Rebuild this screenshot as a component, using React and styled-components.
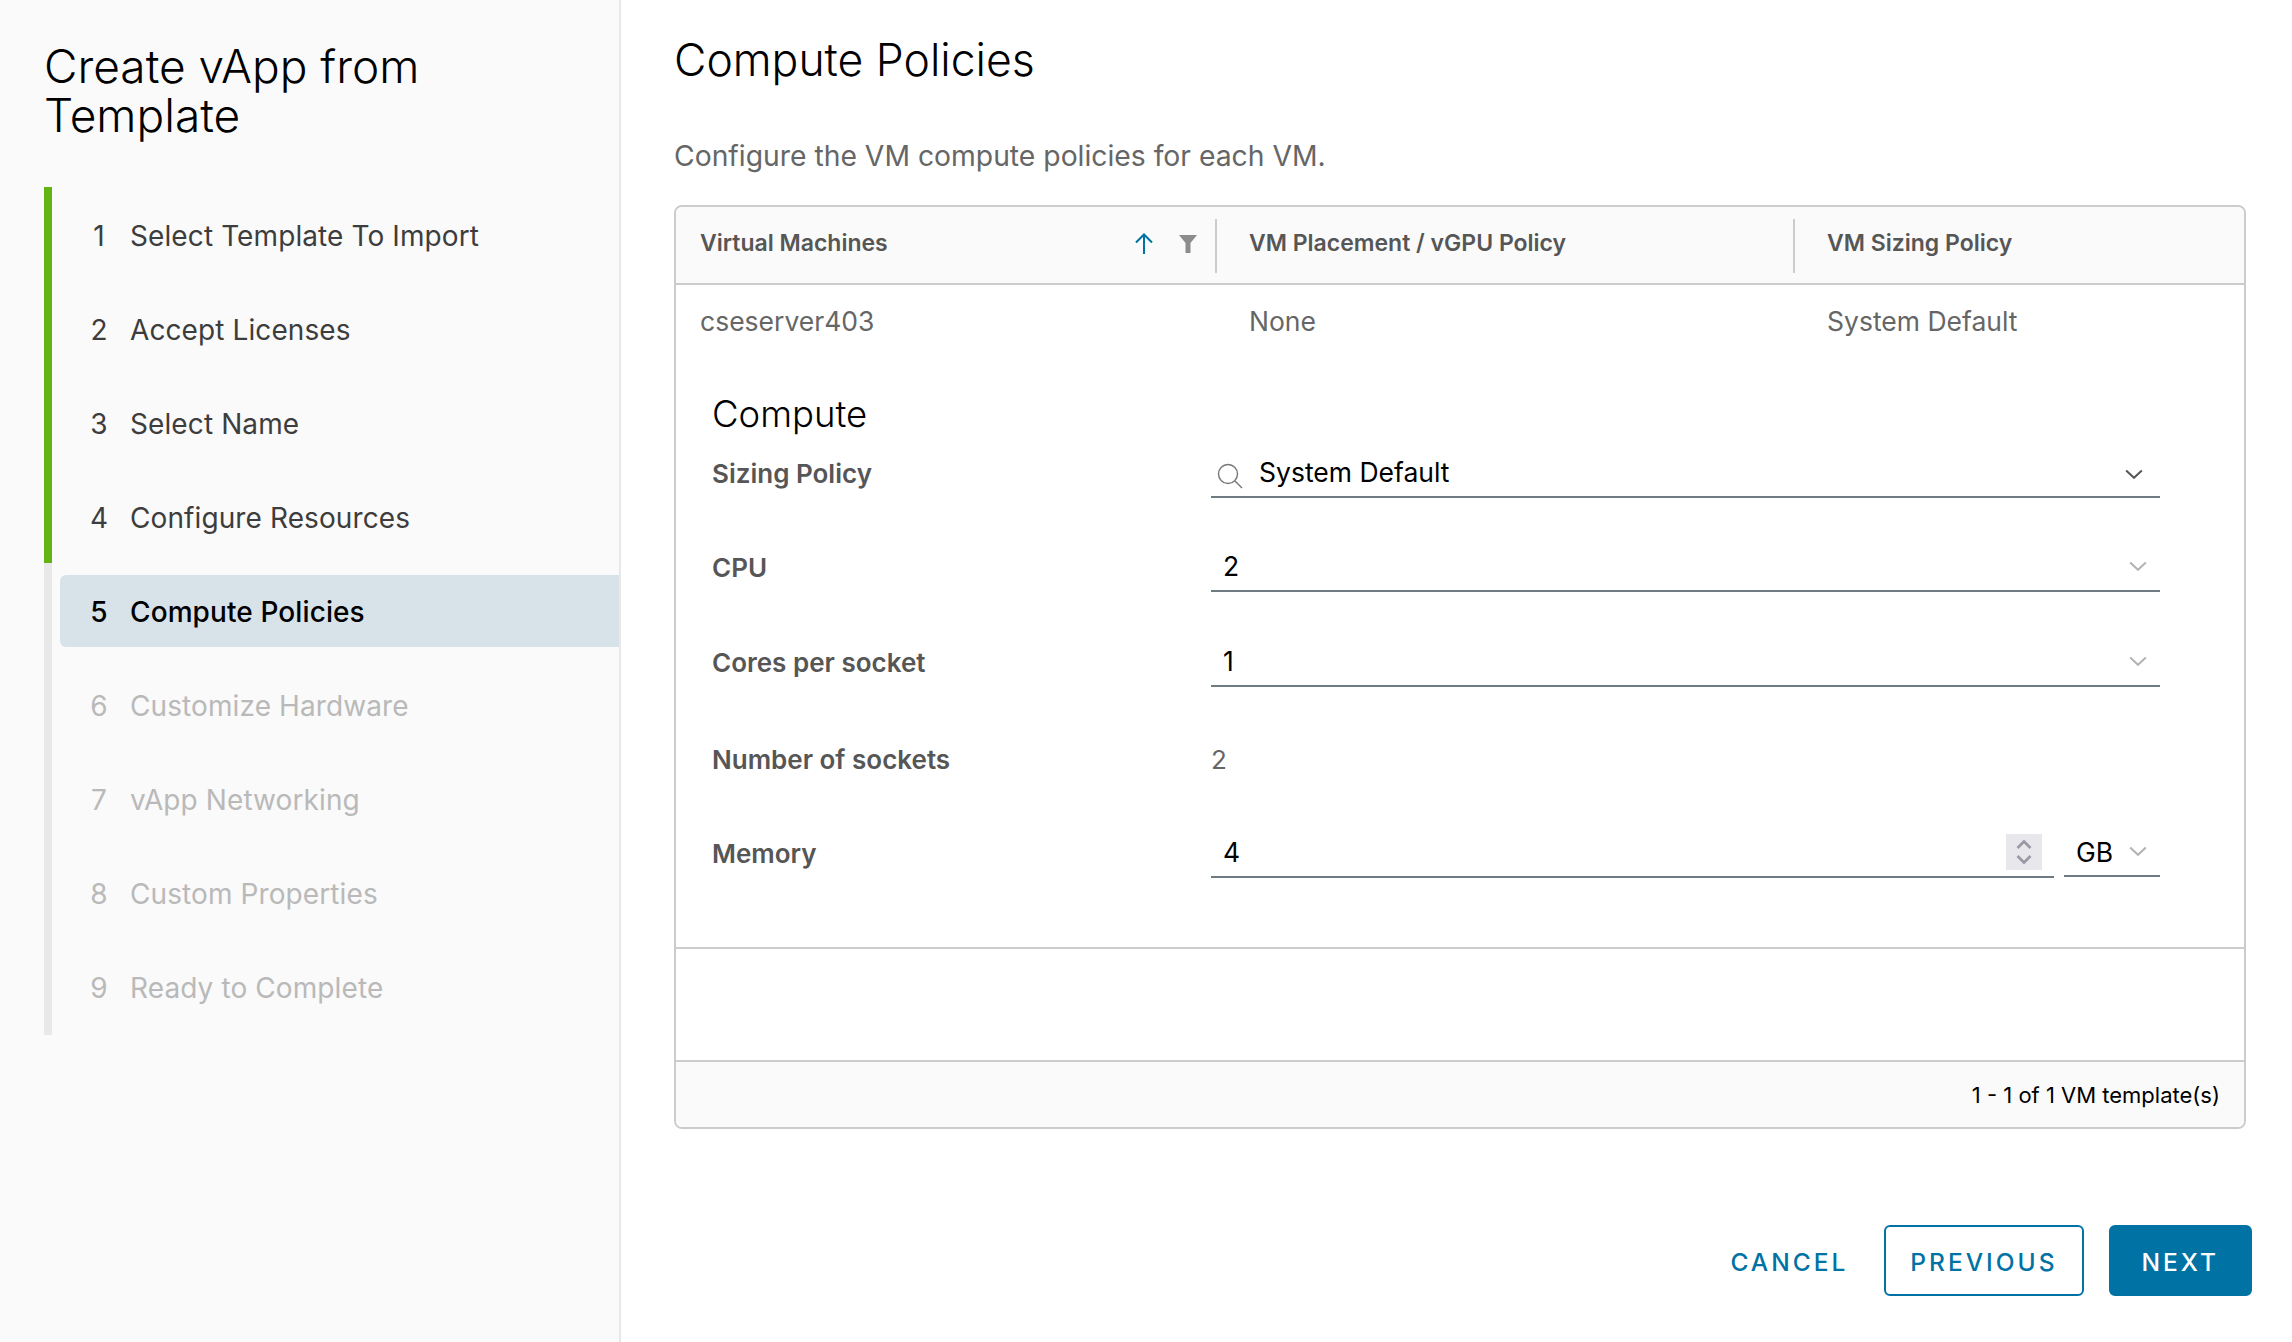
import React from "react";
import styled, { createGlobalStyle } from "styled-components";

const GlobalStyle = createGlobalStyle`
  html, body {
    margin: 0;
    padding: 0;
    background: #ffffff;
    font-family: "Inter", "Liberation Sans", sans-serif;
  }
  * {
    box-sizing: border-box;
  }
`;

const Page = styled.div`
  display: flex;
  width: 2292px;
  height: 1342px;
  overflow: hidden;
`;

const Sidebar = styled.aside`
  width: 621px;
  flex: none;
  padding: 42px 0 0 44px;
  background: #fafafa;
  border-right: 2px solid #e8e8e8;
`;

const Title = styled.h1`
  margin: 0;
  font-size: 46px;
  line-height: 49px;
  font-weight: 300;
  color: #000000;
`;

const Steps = styled.ol`
  list-style: none;
  margin: 47px 0 0;
  padding: 0;
`;

const Step = styled.li`
  height: 94px;
  padding: 12px 0 10px 8px;
  border-left: 8px solid ${(p) => (p.$done ? "#60b515" : "#e8e8e8")};

  &:last-child {
    height: 96px;
  }
`;

const StepRow = styled.div`
  display: flex;
  align-items: center;
  height: 72px;
  padding: 1px 0 0 29px;
  gap: 21px;
  font-size: 28px;
  letter-spacing: 0.1px;
  border-radius: 6px 0 0 6px;
  background: ${(p) => (p.$active ? "#d8e3e9" : "transparent")};
  font-weight: ${(p) => (p.$active ? 500 : 400)};
  color: ${(p) => (p.$active ? "#000000" : p.$disabled ? "#b9b9b9" : "#3d3d3d")};
`;

const StepNumber = styled.span`
  width: 20px;
  text-align: center;
`;

const Main = styled.main`
  flex: 1;
  min-width: 0;
  padding: 30px 40px 0 53px;
`;

const Heading = styled.h2`
  margin: 0;
  font-size: 44.5px;
  line-height: 60px;
  font-weight: 300;
  color: #000000;
`;

const Description = styled.p`
  margin: 46px 0 0;
  font-size: 28.3px;
  line-height: 40px;
  color: #666666;
`;

const Table = styled.div`
  display: flex;
  flex-direction: column;
  height: 924px;
  margin: 29px 6px 0 0;
  border: 2px solid #cccccc;
  border-radius: 8px;
  overflow: hidden;
`;

const ColumnsRow = styled.div`
  display: grid;
  grid-template-columns: 541px 578px 1fr;
`;

const TableHead = styled(ColumnsRow)`
  height: 78px;
  background: #fafafa;
  border-bottom: 2px solid #cccccc;
`;

const HeadCell = styled.div`
  display: flex;
  align-items: center;
  margin: 12px 0 10px;
  padding: 0 0 6px ${(p) => p.$inset}px;
  font-size: 23px;
  font-weight: 600;
  color: #565656;
  border-right: ${(p) => (p.$last ? "none" : "2px solid #cccccc")};
`;

const HeadIcons = styled.div`
  display: flex;
  align-items: center;
  gap: 25px;
  margin-left: auto;
  padding: 2px 18px 0 0;
`;

const BodyRow = styled(ColumnsRow)`
  height: 74px;
  padding-bottom: 2px;
  align-items: center;
`;

const BodyCell = styled.div`
  padding-left: ${(p) => p.$inset}px;
  font-size: 26.5px;
  color: #666666;
`;

const Detail = styled.section`
  height: 590px;
  padding: 35px 84px 0 36px;
  border-bottom: 2px solid #cccccc;
`;

const DetailTitle = styled.h3`
  margin: 0 0 14px;
  font-size: 36.5px;
  line-height: 40px;
  font-weight: 300;
  color: #000000;
`;

const FormRow = styled.div`
  display: grid;
  grid-template-columns: 499px 1fr;
  align-items: center;
  height: ${(p) => p.$height ?? 50}px;
  margin-bottom: ${(p) => p.$after ?? 45}px;
`;

const Label = styled.label`
  font-size: 26px;
  font-weight: 600;
  color: #565656;
`;

const Control = styled.div`
  display: flex;
  align-items: center;
  height: 50px;
  padding-left: ${(p) => p.$inset ?? 12}px;
  font-size: 26.5px;
  color: #000000;
  border-bottom: 2px solid #6e7b82;
`;

const ControlIcon = styled.span`
  display: flex;
  margin-left: auto;
  padding-top: ${(p) => p.$down ?? 0}px;
  padding-right: ${(p) => p.$right ?? 13}px;
`;

const SearchSlot = styled.span`
  display: flex;
  margin: 8px 16px 0 0;
`;

const PlainValue = styled.div`
  font-size: 26px;
  color: #666666;
`;

const MemoryControls = styled.div`
  display: flex;
  gap: 10px;
`;

const MemoryInput = styled(Control)`
  flex: 1;
  padding-right: 12px;
`;

const UnitSelect = styled(Control)`
  width: 96px;
  height: 49px;
`;

const Spinner = styled.div`
  display: flex;
  align-items: center;
  justify-content: center;
  width: 36px;
  height: 36px;
  margin-left: auto;
  background: #e8e8ec;
`;

const TableSpacer = styled.div`
  flex: 1;
`;

const TableFooter = styled.div`
  display: flex;
  align-items: center;
  justify-content: flex-end;
  height: 67px;
  padding-right: 24px;
  font-size: 22px;
  color: #000000;
  background: #fafafa;
  border-top: 2px solid #cccccc;
`;

const Actions = styled.div`
  display: flex;
  justify-content: flex-end;
  gap: 25px;
  margin-top: 96px;
`;

const Button = styled.button`
  height: 71px;
  padding: 3px ${(p) => p.$pad}px 0;
  font-family: inherit;
  font-size: 24.5px;
  font-weight: 500;
  letter-spacing: 3px;
  border-radius: 6px;
  border: 2px solid ${(p) => (p.$variant === "ghost" ? "transparent" : "#0072a3")};
  color: ${(p) => (p.$variant === "solid" ? "#ffffff" : "#0072a3")};
  background: ${(p) => (p.$variant === "solid" ? "#0072a3" : "transparent")};
`;

const Chevron = ({ color = "#b3b3b3", size = 18 }) => (
  <svg width={size} height={size * 0.6} viewBox="0 0 18 11" fill="none">
    <path d="M1 1.5 L9 9 L17 1.5" stroke={color} strokeWidth="2" />
  </svg>
);

const SortArrow = () => (
  <svg width="20" height="22" viewBox="0 0 20 22" fill="none">
    <path d="M10 21 V2 M2 9.5 L10 1.5 L18 9.5" stroke="#0072a3" strokeWidth="2" />
  </svg>
);

const FilterIcon = () => (
  <svg width="18" height="18" viewBox="0 0 18 18">
    <path d="M0 0 H18 L11.5 8 V18 H6.5 V8 Z" fill="#8c8c8c" />
  </svg>
);

const SearchIcon = () => (
  <svg width="26" height="26" viewBox="0 0 26 26" fill="none">
    <circle cx="11" cy="11" r="9.5" stroke="#777777" strokeWidth="1.4" />
    <path d="M18 18 L25 25" stroke="#777777" strokeWidth="1.4" />
  </svg>
);

const SpinnerArrows = () => (
  <svg width="16" height="26" viewBox="0 0 16 26" fill="none">
    <path d="M1.5 9 L8 2.5 L14.5 9 M1.5 17 L8 23.5 L14.5 17" stroke="#9a9aa6" strokeWidth="2.8" />
  </svg>
);

const steps = [
  "Select Template To Import",
  "Accept Licenses",
  "Select Name",
  "Configure Resources",
  "Compute Policies",
  "Customize Hardware",
  "vApp Networking",
  "Custom Properties",
  "Ready to Complete",
];
const currentStep = 4;

export default function App() {
  return (
    <Page>
      <GlobalStyle />
      <Sidebar>
        <Title>
          Create vApp from
          <br />
          Template
        </Title>
        <Steps>
          {steps.map((name, i) => (
            <Step key={name} $done={i < currentStep}>
              <StepRow $active={i === currentStep} $disabled={i > currentStep}>
                <StepNumber>{i + 1}</StepNumber>
                <span>{name}</span>
              </StepRow>
            </Step>
          ))}
        </Steps>
      </Sidebar>
      <Main>
        <Heading>Compute Policies</Heading>
        <Description>Configure the VM compute policies for each VM.</Description>
        <Table>
          <TableHead>
            <HeadCell $inset={24}>
              Virtual Machines
              <HeadIcons>
                <SortArrow />
                <FilterIcon />
              </HeadIcons>
            </HeadCell>
            <HeadCell $inset={32}>VM Placement / vGPU Policy</HeadCell>
            <HeadCell $inset={32} $last>
              VM Sizing Policy
            </HeadCell>
          </TableHead>
          <BodyRow>
            <BodyCell $inset={24}>cseserver403</BodyCell>
            <BodyCell $inset={32}>None</BodyCell>
            <BodyCell $inset={32}>System Default</BodyCell>
          </BodyRow>
          <Detail>
            <DetailTitle>Compute</DetailTitle>
            <FormRow $after={44}>
              <Label>Sizing Policy</Label>
              <Control $inset={6}>
                <SearchSlot>
                  <SearchIcon />
                </SearchSlot>
                System Default
                <ControlIcon $right={17} $down={4}>
                  <Chevron color="#565656" />
                </ControlIcon>
              </Control>
            </FormRow>
            <FormRow $height={49} $after={46}>
              <Label>CPU</Label>
              <Control>
                2
                <ControlIcon>
                  <Chevron />
                </ControlIcon>
              </Control>
            </FormRow>
            <FormRow $after={47}>
              <Label>Cores per socket</Label>
              <Control>
                1
                <ControlIcon>
                  <Chevron />
                </ControlIcon>
              </Control>
            </FormRow>
            <FormRow $after={44}>
              <Label>Number of sockets</Label>
              <PlainValue>2</PlainValue>
            </FormRow>
            <FormRow>
              <Label>Memory</Label>
              <MemoryControls>
                <MemoryInput>
                  4
                  <Spinner>
                    <SpinnerArrows />
                  </Spinner>
                </MemoryInput>
                <UnitSelect>
                  GB
                  <ControlIcon>
                    <Chevron />
                  </ControlIcon>
                </UnitSelect>
              </MemoryControls>
            </FormRow>
          </Detail>
          <TableSpacer />
          <TableFooter>1 - 1 of 1 VM template(s)</TableFooter>
        </Table>
        <Actions>
          <Button $variant="ghost" $pad={9}>CANCEL</Button>
          <Button $variant="outline" $pad={24}>PREVIOUS</Button>
          <Button $variant="solid" $pad={31}>NEXT</Button>
        </Actions>
      </Main>
    </Page>
  );
}
